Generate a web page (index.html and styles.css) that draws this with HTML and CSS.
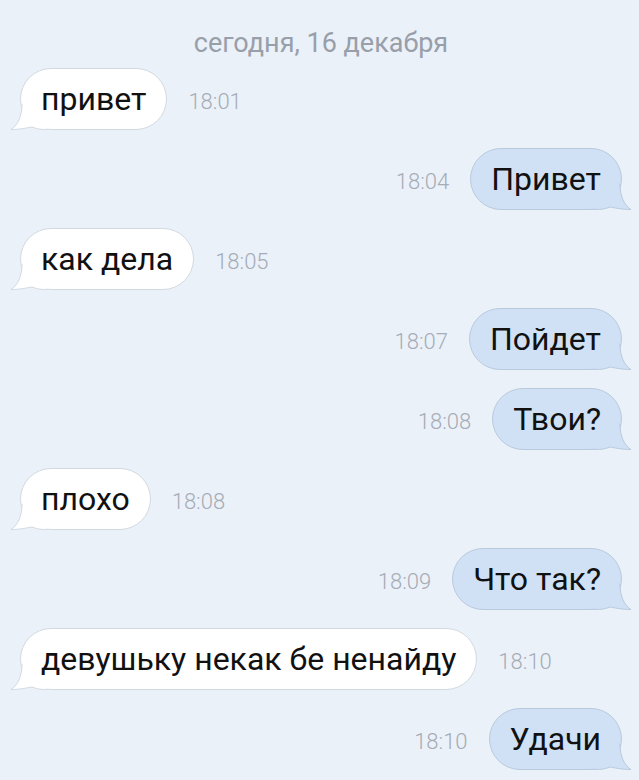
FILE: index.html
```html
<!DOCTYPE html>
<html>
<head>
  <meta charset="utf-8">
  <title>сегодня, 16 декабря</title>
  <link rel="stylesheet" href="styles.css">
</head>
<body>
  <div class="chat">
    <div class="date">сегодня, 16 декабря</div>

    <div class="row in">
      <div class="bubble">привет
        <svg class="tail" width="40" height="30" viewBox="0 0 40 30"><path d="M12 4 C12 16 8 25 1 29.5 C10 29.5 16 28 22 27 C28 29.5 32 29.5 38 29.5"/></svg>
      </div>
      <span class="time">18:01</span>
    </div>

    <div class="row out">
      <span class="time">18:04</span>
      <div class="bubble">Привет
        <svg class="tail" width="40" height="30" viewBox="0 0 40 30"><path d="M12 4 C12 16 8 25 1 29.5 C10 29.5 16 28 22 27 C28 29.5 32 29.5 38 29.5"/></svg>
      </div>
    </div>

    <div class="row in">
      <div class="bubble">как дела
        <svg class="tail" width="40" height="30" viewBox="0 0 40 30"><path d="M12 4 C12 16 8 25 1 29.5 C10 29.5 16 28 22 27 C28 29.5 32 29.5 38 29.5"/></svg>
      </div>
      <span class="time">18:05</span>
    </div>

    <div class="row out">
      <span class="time">18:07</span>
      <div class="bubble">Пойдет
        <svg class="tail" width="40" height="30" viewBox="0 0 40 30"><path d="M12 4 C12 16 8 25 1 29.5 C10 29.5 16 28 22 27 C28 29.5 32 29.5 38 29.5"/></svg>
      </div>
    </div>

    <div class="row out">
      <span class="time">18:08</span>
      <div class="bubble">Твои?
        <svg class="tail" width="40" height="30" viewBox="0 0 40 30"><path d="M12 4 C12 16 8 25 1 29.5 C10 29.5 16 28 22 27 C28 29.5 32 29.5 38 29.5"/></svg>
      </div>
    </div>

    <div class="row in">
      <div class="bubble">плохо
        <svg class="tail" width="40" height="30" viewBox="0 0 40 30"><path d="M12 4 C12 16 8 25 1 29.5 C10 29.5 16 28 22 27 C28 29.5 32 29.5 38 29.5"/></svg>
      </div>
      <span class="time">18:08</span>
    </div>

    <div class="row out">
      <span class="time">18:09</span>
      <div class="bubble">Что так?
        <svg class="tail" width="40" height="30" viewBox="0 0 40 30"><path d="M12 4 C12 16 8 25 1 29.5 C10 29.5 16 28 22 27 C28 29.5 32 29.5 38 29.5"/></svg>
      </div>
    </div>

    <div class="row in">
      <div class="bubble">девушьку некак бе ненайду
        <svg class="tail" width="40" height="30" viewBox="0 0 40 30"><path d="M12 4 C12 16 8 25 1 29.5 C10 29.5 16 28 22 27 C28 29.5 32 29.5 38 29.5"/></svg>
      </div>
      <span class="time">18:10</span>
    </div>

    <div class="row out">
      <span class="time">18:10</span>
      <div class="bubble">Удачи
        <svg class="tail" width="40" height="30" viewBox="0 0 40 30"><path d="M12 4 C12 16 8 25 1 29.5 C10 29.5 16 28 22 27 C28 29.5 32 29.5 38 29.5"/></svg>
      </div>
    </div>
  </div>
</body>
</html>
```

FILE: styles.css
```css
/* фон и шрифт всего чата */
body {
  margin: 0;
  background-color: #ebf1f9;
  font-family: Roboto, "Liberation Sans", Arial, sans-serif;
}

.chat {
  display: flex;
  flex-direction: column;
  gap: 18px;
  padding: 28px 17px 20px 20px;
}

.date {
  text-align: center;
  font-size: 27px;
  line-height: 30px;
  color: #989fa9;
  margin-bottom: -8px;
}

.row {
  display: flex;
  align-items: center;
  gap: 21px;
}

.row.out {
  justify-content: flex-end;
}

.bubble {
  position: relative;
  height: 62px;
  box-sizing: border-box;
  padding: 0 20px;
  display: flex;
  align-items: center;
  font-size: 32px;
  color: #111111;
  background-color: #ffffff;
  border: 1px solid #d3d9e1;
  border-radius: 31px;
  white-space: nowrap;
}

.out .bubble {
  background-color: #d0e1f6;
  border-color: #b9cadd;
}

.tail {
  position: absolute;
  bottom: -1px;
  left: -11px;
}

.tail path {
  fill: #ffffff;
  stroke: #d3d9e1;
  stroke-width: 1;
}

.out .tail {
  left: auto;
  right: -11px;
  transform: scaleX(-1);
}

.out .tail path {
  fill: #d0e1f6;
  stroke: #b9cadd;
}

.time {
  font-size: 22px;
  color: #a5acb6;
  font-weight: 300;
  padding-top: 4px;
}
```
